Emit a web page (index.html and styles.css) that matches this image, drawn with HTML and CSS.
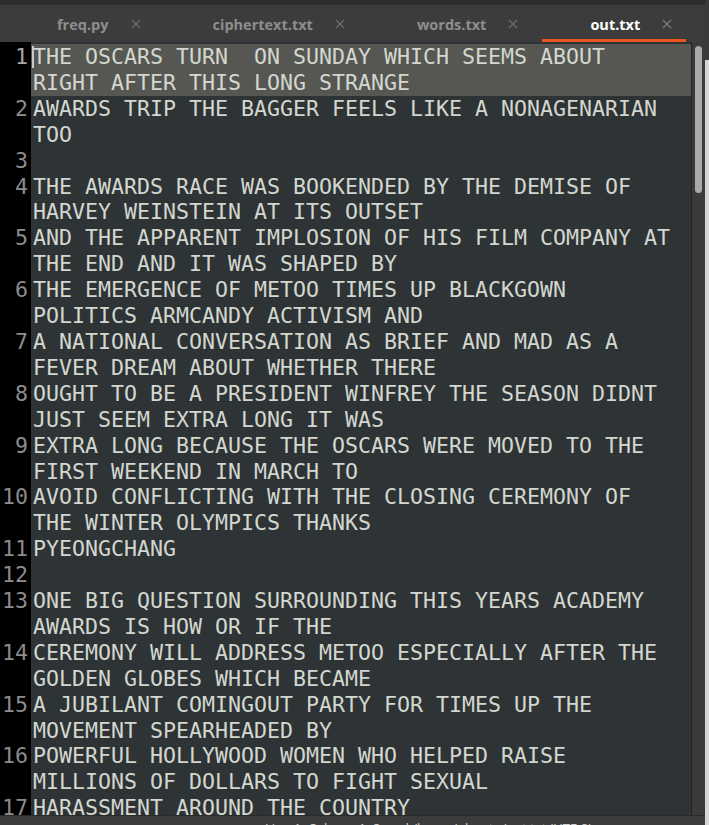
FILE: index.html
```html
<!DOCTYPE html>
<html>
<head>
<meta charset="utf-8">
<link rel="stylesheet" href="styles.css">
</head>
<body>
<div class="window">
  <div class="topstrip"></div>
  <div class="tabs">
    <div class="tab"><span class="tname">freq.py</span><svg class="close" width="10" height="10" viewBox="0 0 10 10"><path d="M1 1L9 9M9 1L1 9" stroke="#6e6e6e" stroke-width="1.3"/></svg></div>
    <div class="tab"><span class="tname">ciphertext.txt</span><svg class="close" width="10" height="10" viewBox="0 0 10 10"><path d="M1 1L9 9M9 1L1 9" stroke="#6e6e6e" stroke-width="1.3"/></svg></div>
    <div class="tab"><span class="tname">words.txt</span><svg class="close" width="10" height="10" viewBox="0 0 10 10"><path d="M1 1L9 9M9 1L1 9" stroke="#6e6e6e" stroke-width="1.3"/></svg></div>
    <div class="tab active"><span class="tname">out.txt</span><svg class="close" width="10" height="10" viewBox="0 0 10 10"><path d="M1 1L9 9M9 1L1 9" stroke="#7a7a7a" stroke-width="1.3"/></svg></div>
  </div>
  <div class="body">
    <div class="code">
      <div class="ln current"><div class="num">1</div><div class="txt"><span class="cursor"></span><span class="vl">THE OSCARS TURN  ON SUNDAY WHICH SEEMS ABOUT</span><span class="vl">RIGHT AFTER THIS LONG STRANGE</span></div></div>
      <div class="ln"><div class="num">2</div><div class="txt"><span class="vl">AWARDS TRIP THE BAGGER FEELS LIKE A NONAGENARIAN</span><span class="vl">TOO</span></div></div>
      <div class="ln"><div class="num">3</div><div class="txt"><span class="vl"> </span></div></div>
      <div class="ln"><div class="num">4</div><div class="txt"><span class="vl">THE AWARDS RACE WAS BOOKENDED BY THE DEMISE OF</span><span class="vl">HARVEY WEINSTEIN AT ITS OUTSET</span></div></div>
      <div class="ln"><div class="num">5</div><div class="txt"><span class="vl">AND THE APPARENT IMPLOSION OF HIS FILM COMPANY AT</span><span class="vl">THE END AND IT WAS SHAPED BY</span></div></div>
      <div class="ln"><div class="num">6</div><div class="txt"><span class="vl">THE EMERGENCE OF METOO TIMES UP BLACKGOWN</span><span class="vl">POLITICS ARMCANDY ACTIVISM AND</span></div></div>
      <div class="ln"><div class="num">7</div><div class="txt"><span class="vl">A NATIONAL CONVERSATION AS BRIEF AND MAD AS A</span><span class="vl">FEVER DREAM ABOUT WHETHER THERE</span></div></div>
      <div class="ln"><div class="num">8</div><div class="txt"><span class="vl">OUGHT TO BE A PRESIDENT WINFREY THE SEASON DIDNT</span><span class="vl">JUST SEEM EXTRA LONG IT WAS</span></div></div>
      <div class="ln"><div class="num">9</div><div class="txt"><span class="vl">EXTRA LONG BECAUSE THE OSCARS WERE MOVED TO THE</span><span class="vl">FIRST WEEKEND IN MARCH TO</span></div></div>
      <div class="ln"><div class="num">10</div><div class="txt"><span class="vl">AVOID CONFLICTING WITH THE CLOSING CEREMONY OF</span><span class="vl">THE WINTER OLYMPICS THANKS</span></div></div>
      <div class="ln"><div class="num">11</div><div class="txt"><span class="vl">PYEONGCHANG</span></div></div>
      <div class="ln"><div class="num">12</div><div class="txt"><span class="vl"> </span></div></div>
      <div class="ln"><div class="num">13</div><div class="txt"><span class="vl">ONE BIG QUESTION SURROUNDING THIS YEARS ACADEMY</span><span class="vl">AWARDS IS HOW OR IF THE</span></div></div>
      <div class="ln"><div class="num">14</div><div class="txt"><span class="vl">CEREMONY WILL ADDRESS METOO ESPECIALLY AFTER THE</span><span class="vl">GOLDEN GLOBES WHICH BECAME</span></div></div>
      <div class="ln"><div class="num">15</div><div class="txt"><span class="vl">A JUBILANT COMINGOUT PARTY FOR TIMES UP THE</span><span class="vl">MOVEMENT SPEARHEADED BY</span></div></div>
      <div class="ln"><div class="num">16</div><div class="txt"><span class="vl">POWERFUL HOLLYWOOD WOMEN WHO HELPED RAISE</span><span class="vl">MILLIONS OF DOLLARS TO FIGHT SEXUAL</span></div></div>
      <div class="ln"><div class="num">17</div><div class="txt"><span class="vl">HARASSMENT AROUND THE COUNTRY</span></div></div>
    </div>
    <div class="scroll"><div class="thumb"></div></div>
  </div>
  <div class="status"><span class="stext">Line 1, Column 1; Saved /home/ubuntu/out.txt (UTF-8)</span></div>
</div>
<div class="edge"><div class="edgetop"></div></div>
</body>
</html>
```
FILE: styles.css
```css
html, body {
  margin: 0;
  padding: 0;
  height: 825px;
  overflow: hidden;
}
body {
  display: flex;
  background: #d6d6d6;
}
.window {
  width: 705px;
  height: 825px;
  display: flex;
  flex-direction: column;
  background: #3c3c3c;
  flex: none;
}
.edge {
  flex: 1;
  display: flex;
  flex-direction: column;
}
.edgetop {
  height: 60px;
  background: #3a3a3a;
}
.topstrip {
  height: 5px;
  background: #2c2c2c;
  flex: none;
}
.tabs {
  height: 37px;
  flex: none;
  display: flex;
  gap: 10px;
  padding-left: 9px;
  background: #3c3c3c;
  box-sizing: border-box;
}
.tab {
  display: flex;
  align-items: center;
  padding: 4px 14px 0 48px;
  border-bottom: 3px solid transparent;
  font-family: "Open Sans", "Noto Sans", sans-serif;
  font-weight: 700;
  font-size: 14.5px;
  color: #8e8e8e;
}
.tab.active {
  border-bottom-color: #e9541f;
  color: #ffffff;
}
.close {
  margin-left: 22px;
  display: block;
}
.body {
  flex: 1;
  display: flex;
  min-height: 0;
}
.code {
  width: 691px;
  flex: none;
  overflow: hidden;
  padding-top: 2px;
  background: linear-gradient(to right, #000 31px, #2e3436 31px);
  border-right: 1px solid #242424;
  font-family: "DejaVu Sans Mono", monospace;
  font-size: 21.6px;
  line-height: 25.9px;
}
.ln {
  display: flex;
}
.num {
  width: 28px;
  padding-right: 3px;
  flex: none;
  text-align: right;
  color: #8c8c8c;
  background: #000;
}
.txt {
  flex: 1;
  position: relative;
  padding-left: 2px;
  color: #d3d7cf;
}
.current .txt {
  background: #565752;
}
.current .num {
  color: #a8a8a8;
}
.vl {
  display: block;
  white-space: pre;
}
.cursor {
  position: absolute;
  left: 1px;
  top: 2px;
  width: 2px;
  height: 22px;
  background: #c8c8c8;
}
.scroll {
  flex: 1;
  background: #3b3b3b;
  padding: 4px 0 0 3px;
}
.thumb {
  width: 7px;
  height: 147px;
  border-radius: 4px;
  background: #a9a9a9;
}
.status {
  height: 9px;
  flex: none;
  border-top: 1px solid #2a2a2a;
  background: #3c3c3c;
  overflow: hidden;
  padding-left: 265px;
}
.stext {
  display: inline-block;
  margin-top: 4px;
  font-family: "Open Sans", sans-serif;
  font-size: 13px;
  line-height: 16px;
  color: #d0d0d0;
}
```
